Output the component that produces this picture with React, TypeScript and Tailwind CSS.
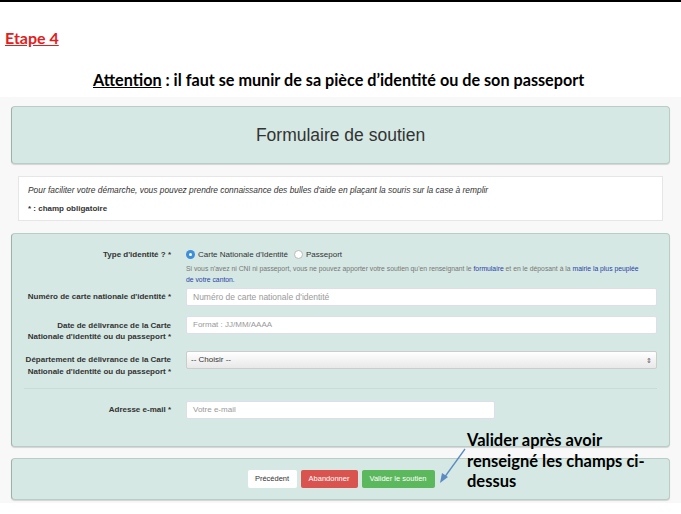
import React from "react";

const panel =
  "bg-[#d5e8e3] border border-[#b9ccc6] border-l-[#9fb0ab] rounded-[4px] shadow-[0_1px_1px_rgba(0,0,0,0.15)]";

function Radio({ checked }: { checked?: boolean }) {
  return checked ? (
    <span className="inline-flex w-[9px] h-[9px] rounded-full bg-[#3d8fd8] items-center justify-center mr-[3px]">
      <span className="w-[3px] h-[3px] rounded-full bg-white" />
    </span>
  ) : (
    <span className="inline-block w-[9px] h-[9px] rounded-full bg-white border border-[#bbb] mr-[3px]" />
  );
}

export default function App() {
  const helv = { fontFamily: '"Liberation Sans", Arial, sans-serif' };
  const cal = { fontFamily: 'Lato, "Open Sans", sans-serif' };
  return (
    <div className="w-[681px] h-[514px] bg-white relative overflow-hidden">
      <div className="h-[2px] bg-black" />
      <div style={cal} className="h-[95px] relative">
        <div className="pt-[27px] pl-[5px] text-[16px] font-bold text-[#e02020] underline leading-[18px]">
          Etape 4
        </div>
        <div className="mt-[24px] pl-[93px] text-[16.2px] font-bold text-black leading-[18px] whitespace-nowrap">
          <span className="underline">Attention</span> : il faut se munir de sa pièce d’identité ou de son passeport
        </div>
      </div>
      <div style={helv} className="bg-[#f8f8f8] h-[406px] px-[11px] pt-[9px] flex flex-col">
        <div className={`${panel} h-[58px] flex items-center justify-center`}>
          <span className="text-[17.5px] text-[#333]">Formulaire de soutien</span>
        </div>
        <div className="mt-[12px] mx-[7px] h-[45px] bg-white border border-[#e6e6e6] px-[9px] pt-[8px]">
          <div className="text-[8.4px] italic text-[#333] leading-[11px] whitespace-nowrap">
            Pour faciliter votre démarche, vous pouvez prendre connaissance des bulles d'aide en plaçant la souris sur la case à remplir
          </div>
          <div className="text-[8px] font-bold text-[#333] leading-[10px] mt-[8px]">* : champ obligatoire</div>
        </div>
        <div className={`${panel} mt-[12px] h-[214px] pl-[12px] pr-[12px] pt-[15px]`}>
          <div className="grid grid-cols-[147px_1fr] gap-x-[15px] text-[8px] text-[#333]">
            <div className="text-right font-bold leading-[10px] pt-[1px] whitespace-nowrap">Type d'identité ? *</div>
            <div>
              <div className="flex items-center h-[11px] text-[8px]">
                <Radio checked />
                <span>Carte Nationale d'Identité</span>
                <span className="ml-[6px]" />
                <Radio />
                <span>Passeport</span>
              </div>
              <div className="mt-[3px] leading-[11px] text-[6.8px] text-[#777] whitespace-nowrap">
                Si vous n'avez ni CNI ni passeport, vous ne pouvez apporter votre soutien qu'en renseignant le{" "}
                <span className="text-[#2a3fa8]">formulaire</span> et en le déposant à la{" "}
                <span className="text-[#2a3fa8]">mairie la plus peuplée</span>
              </div>
              <div className="leading-[11px] text-[6.8px] text-[#2a3fa8]">de votre canton.</div>
            </div>

            <div className="text-right font-bold leading-[10px] mt-[3px] flex items-center justify-end h-[18px] whitespace-nowrap">
              Numéro de carte nationale d'identité *
            </div>
            <div className="mt-[3px] h-[18px] bg-white border border-[#dde] rounded-[2px] flex items-center px-[6px] text-[#999] text-[8.5px] whitespace-nowrap">
              Numéro de carte nationale d'identité
            </div>

            <div className="text-right font-bold leading-[11px] mt-[10px] pt-[4px] whitespace-nowrap">
              Date de délivrance de la Carte
              <br />
              Nationale d'identité ou du passeport *
            </div>
            <div className="mt-[10px] h-[18px] bg-white border border-[#dde] rounded-[2px] flex items-center px-[6px] text-[#999] text-[8px]">
              Format : JJ/MM/AAAA
            </div>

            <div className="text-right font-bold leading-[12px] mt-[9px] pt-[3px] whitespace-nowrap">
              Département de délivrance de la Carte
              <br />
              Nationale d'identité ou du passeport *
            </div>
            <div className="mt-[9px] h-[18px] bg-gradient-to-b from-white to-[#e8e8e8] border border-[#ccc] rounded-[2px] flex items-center justify-between px-[4px] text-[#333] text-[8px]">
              <span>-- Choisir --</span>
              <span className="text-[7px] leading-[7px] text-[#555]">⇕</span>
            </div>

            <div className="col-span-2 mt-[10px] mb-[12px] h-px bg-[#c9dcd6]" />

            <div className="text-right font-bold flex items-center justify-end h-[18px]">Adresse e-mail *</div>
            <div>
              <div className="w-[309px] h-[18px] bg-white border border-[#dde] rounded-[2px] flex items-center px-[6px] text-[#999] text-[8px]">
                Votre e-mail
              </div>
            </div>
          </div>
        </div>
        <div className={`${panel} mt-[11px] h-[42px] flex items-center justify-center gap-[4px] pl-[1px] text-[7.5px]`}>
          <button className="h-[18px] w-[49px] bg-white text-[#333] rounded-[2px]">Précédent</button>
          <button className="h-[18px] w-[57px] bg-[#d9534f] text-white rounded-[2px]">Abandonner</button>
          <button className="h-[18px] w-[73px] bg-[#5cb85c] text-white rounded-[2px]">Valider le soutien</button>
        </div>
      </div>

      <div
        style={cal}
        className="absolute left-[467px] top-[430px] text-[16.5px] font-bold text-black leading-[20.5px] whitespace-nowrap"
      >
        Valider après avoir
        <br />
        renseigné les champs ci-
        <br />
        dessus
      </div>
      <svg className="absolute left-0 top-0" width="681" height="514" viewBox="0 0 681 514">
        <line x1="465" y1="449" x2="444" y2="478" stroke="#5b8ac4" strokeWidth="1.3" />
        <polygon points="440,483 442,473 448,477" fill="#5b8ac4" />
      </svg>
    </div>
  );
}
